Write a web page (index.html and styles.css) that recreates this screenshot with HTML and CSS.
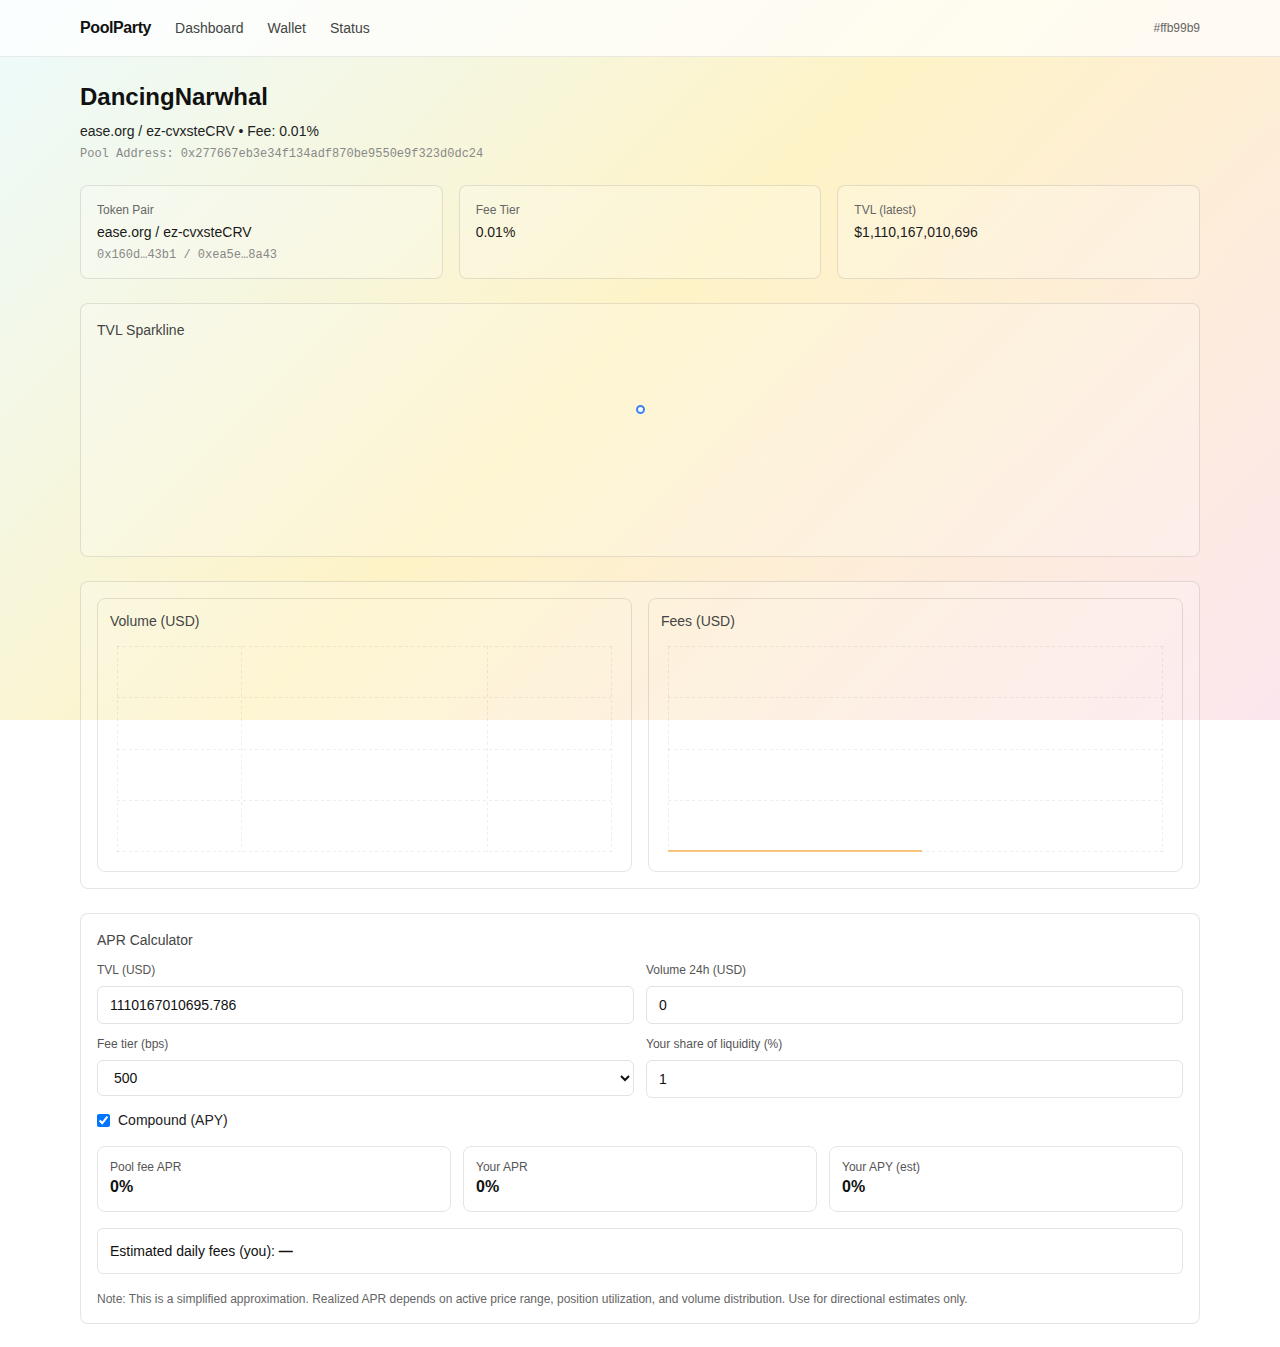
FILE: index.html
```html
<!DOCTYPE html>
<html lang="en">
<head>
<meta charset="utf-8">
<title>PoolParty — DancingNarwhal</title>
<link rel="stylesheet" href="styles.css">
</head>
<body>
<header class="topbar">
  <div class="topbar-inner">
    <nav class="nav">
      <span class="brand">PoolParty</span>
      <a class="nav-link" href="#">Dashboard</a>
      <a class="nav-link" href="#">Wallet</a>
      <a class="nav-link" href="#">Status</a>
    </nav>
    <span class="account">#ffb99b9</span>
  </div>
</header>

<main class="container">
  <h1 class="title">DancingNarwhal</h1>
  <div class="subtitle">ease.org / ez-cvxsteCRV • Fee: 0.01%</div>
  <div class="address">Pool Address: 0x277667eb3e34f134adf870be9550e9f323d0dc24</div>

  <section class="stats">
    <div class="card stat">
      <div class="stat-label">Token Pair</div>
      <div class="stat-value">ease.org / ez-cvxsteCRV</div>
      <div class="stat-mono">0x160d…43b1 / 0xea5e…8a43</div>
    </div>
    <div class="card stat">
      <div class="stat-label">Fee Tier</div>
      <div class="stat-value">0.01%</div>
    </div>
    <div class="card stat">
      <div class="stat-label">TVL (latest)</div>
      <div class="stat-value">$1,110,167,010,696</div>
    </div>
  </section>

  <section class="card sparkline">
    <div class="section-title">TVL Sparkline</div>
    <div class="spark-area"><span class="spinner"></span></div>
  </section>

  <section class="card charts">
    <div class="chart-card">
      <div class="chart-title">Volume (USD)</div>
      <svg class="chart" viewBox="0 0 508 228" width="508" height="228">
        <g class="grid">
          <line x1="7" y1="15.5" x2="501" y2="15.5"/>
          <line x1="7" y1="66.5" x2="501" y2="66.5"/>
          <line x1="7" y1="118.5" x2="501" y2="118.5"/>
          <line x1="7" y1="169.5" x2="501" y2="169.5"/>
          <line x1="7" y1="220.5" x2="501" y2="220.5"/>
          <line x1="7.5" y1="15" x2="7.5" y2="221"/>
          <line x1="131.5" y1="15" x2="131.5" y2="221"/>
          <line x1="377.5" y1="15" x2="377.5" y2="221"/>
          <line x1="501.5" y1="15" x2="501.5" y2="221"/>
        </g>
      </svg>
    </div>
    <div class="chart-card">
      <div class="chart-title">Fees (USD)</div>
      <svg class="chart" viewBox="0 0 508 228" width="508" height="228">
        <g class="grid">
          <line x1="7" y1="15.5" x2="501" y2="15.5"/>
          <line x1="7" y1="66.5" x2="501" y2="66.5"/>
          <line x1="7" y1="118.5" x2="501" y2="118.5"/>
          <line x1="7" y1="169.5" x2="501" y2="169.5"/>
          <line x1="7" y1="220.5" x2="501" y2="220.5"/>
          <line x1="7.5" y1="15" x2="7.5" y2="221"/>
          <line x1="501.5" y1="15" x2="501.5" y2="221"/>
        </g>
        <line class="fee-line" x1="7" y1="220" x2="261" y2="220"/>
      </svg>
    </div>
  </section>

  <section class="card calc">
    <div class="section-title">APR Calculator</div>
    <div class="form-grid">
      <label class="field">
        <span class="field-label">TVL (USD)</span>
        <input class="input" type="text" value="1110167010695.786">
      </label>
      <label class="field">
        <span class="field-label">Volume 24h (USD)</span>
        <input class="input" type="text" value="0">
      </label>
      <label class="field">
        <span class="field-label">Fee tier (bps)</span>
        <select class="select">
          <option>100</option>
          <option selected>500</option>
          <option>3000</option>
          <option>10000</option>
        </select>
      </label>
      <label class="field">
        <span class="field-label">Your share of liquidity (%)</span>
        <input class="input" type="text" value="1">
      </label>
    </div>
    <label class="check-row">
      <input class="checkbox" type="checkbox" checked>
      <span>Compound (APY)</span>
    </label>
    <div class="results">
      <div class="result">
        <div class="result-label">Pool fee APR</div>
        <div class="result-value">0%</div>
      </div>
      <div class="result">
        <div class="result-label">Your APR</div>
        <div class="result-value">0%</div>
      </div>
      <div class="result">
        <div class="result-label">Your APY (est)</div>
        <div class="result-value">0%</div>
      </div>
    </div>
    <div class="daily">Estimated daily fees (you): <strong>—</strong></div>
    <p class="note">Note: This is a simplified approximation. Realized APR depends on active price range, position utilization, and volume distribution. Use for directional estimates only.</p>
  </section>
</main>
</body>
</html>
```

FILE: styles.css
```css
* { box-sizing: border-box; }

html, body { margin: 0; padding: 0; }

body {
  font-family: "Liberation Sans", Arial, sans-serif;
  color: #1f1f1f;
  background-color: #ffffff;
  background-image: linear-gradient(135deg, #ecfbfd 0%, #fef3c7 48%, #fce6ee 100%);
  background-repeat: no-repeat;
  background-size: 100% 720px;
}

.topbar {
  height: 57px;
  background: rgba(255, 255, 255, 0.72);
  border-bottom: 1px solid rgba(0, 0, 0, 0.08);
}

.topbar-inner {
  width: 1120px;
  margin: 0 auto;
  height: 56px;
  display: flex;
  align-items: center;
  justify-content: space-between;
}

.nav {
  display: flex;
  align-items: center;
  gap: 24px;
}

.brand {
  font-weight: 700;
  font-size: 16px;
  letter-spacing: -0.4px;
  color: #111;
}

.nav-link {
  font-size: 14px;
  color: #444;
  text-decoration: none;
}

.account {
  font-size: 12px;
  color: #666;
}

.container {
  width: 1120px;
  margin: 0 auto;
  padding: 24px 0 24px;
}

.title {
  margin: 0;
  font-size: 24px;
  line-height: 32px;
  font-weight: 700;
  color: #111;
}

.subtitle {
  margin-top: 8px;
  font-size: 14px;
  line-height: 20px;
  color: #222;
}

.address {
  margin-top: 5px;
  font-family: "Liberation Mono", "DejaVu Sans Mono", monospace;
  font-size: 12px;
  line-height: 16px;
  color: #888;
}

.card {
  border: 1px solid rgba(0, 0, 0, 0.1);
  border-radius: 8px;
  background: rgba(255, 255, 255, 0.22);
}

.stats {
  margin-top: 23px;
  display: grid;
  grid-template-columns: repeat(3, 1fr);
  gap: 16px;
}

.stat {
  padding: 16px 16px 15px;
}

.stat-label {
  font-size: 12px;
  line-height: 16px;
  color: #666;
}

.stat-value {
  margin-top: 4px;
  font-size: 14px;
  line-height: 20px;
  color: #1a1a1a;
}

.stat-mono {
  margin-top: 5px;
  font-family: "Liberation Mono", "DejaVu Sans Mono", monospace;
  font-size: 12px;
  line-height: 16px;
  color: #888;
}

.sparkline {
  margin-top: 24px;
  padding: 16px 16px 15px;
}

.section-title {
  font-size: 14px;
  line-height: 20px;
  color: #444;
}

.spark-area {
  height: 201px;
  display: flex;
  justify-content: center;
  align-items: flex-start;
  padding-top: 65px;
}

.spinner {
  width: 9px;
  height: 9px;
  border: 2px solid #3b82f6;
  border-radius: 50%;
  background: #fff;
}

.charts {
  margin-top: 24px;
  padding: 16px;
  display: grid;
  grid-template-columns: 1fr 1fr;
  gap: 16px;
}

.chart-card {
  border: 1px solid rgba(0, 0, 0, 0.1);
  border-radius: 8px;
  padding: 12px 12px 12px;
}

.chart-title {
  font-size: 14px;
  line-height: 20px;
  color: #444;
}

.chart {
  display: block;
  width: 508px;
  height: 228px;
}

.grid line {
  stroke: rgba(0, 0, 0, 0.07);
  stroke-width: 1;
  stroke-dasharray: 3 3;
}

.fee-line {
  stroke: #f6c77b;
  stroke-width: 2;
}

.calc {
  margin-top: 24px;
  padding: 16px;
  background: #fff;
}

.form-grid {
  margin-top: 12px;
  display: grid;
  grid-template-columns: 1fr 1fr;
  column-gap: 12px;
  row-gap: 12px;
}

.field {
  display: flex;
  flex-direction: column;
  gap: 8px;
}

.field-label {
  font-size: 12px;
  line-height: 16px;
  color: #555;
}

.input {
  height: 38px;
  padding: 0 12px;
  border: 1px solid #e3e3e3;
  border-radius: 6px;
  background: #fff;
  font-family: "Liberation Sans", Arial, sans-serif;
  font-size: 14px;
  color: #111;
  outline: none;
}

.select {
  height: 36px;
  padding: 0 8px 0 12px;
  border: 1px solid #e3e3e3;
  border-radius: 6px;
  background: #fff;
  font-family: "Liberation Sans", Arial, sans-serif;
  font-size: 14px;
  color: #111;
}

.check-row {
  margin-top: 12px;
  display: flex;
  align-items: center;
  gap: 8px;
  font-size: 14px;
  line-height: 20px;
  color: #222;
}

.checkbox {
  margin: 0;
  width: 13px;
  height: 13px;
}

.results {
  margin-top: 16px;
  display: grid;
  grid-template-columns: repeat(3, 1fr);
  gap: 12px;
}

.result {
  border: 1px solid #e5e5e5;
  border-radius: 8px;
  padding: 12px 12px 14px;
}

.result-label {
  font-size: 12px;
  line-height: 16px;
  color: #555;
}

.result-value {
  margin-top: 2px;
  font-size: 16px;
  line-height: 20px;
  font-weight: 700;
  color: #111;
}

.daily {
  margin-top: 16px;
  border: 1px solid #e5e5e5;
  border-radius: 6px;
  padding: 12px 12px;
  font-size: 14px;
  line-height: 20px;
  color: #111;
}

.note {
  margin: 17px 0 0;
  font-size: 12px;
  line-height: 16px;
  color: #666;
}
```
